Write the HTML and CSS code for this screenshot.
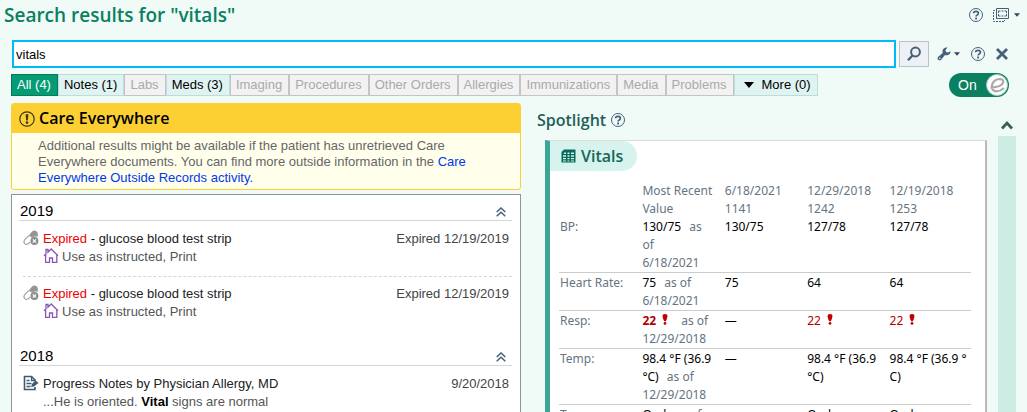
FILE: index.html
```html
<!DOCTYPE html>
<html lang="en">
<head>
<meta charset="utf-8">
<title>Search results for "vitals"</title>
<link rel="stylesheet" href="styles.css">
</head>
<body>
<svg class="symbols" aria-hidden="true">
  <symbol id="help" viewBox="0 0 16 16">
    <circle cx="8" cy="8" r="6.5" fill="none" stroke="currentColor"/>
    <path d="M5.6 6.3Q5.6 4.3 8 4.3T10.4 6.2Q10.4 7.3 9.2 7.9Q8.1 8.4 8.1 9.6" fill="none" stroke="currentColor" stroke-width="1.7"/>
    <path d="M7.2 10.6h1.8v1.8H7.2z" fill="currentColor"/>
  </symbol>
  <symbol id="caret" viewBox="0 0 10 6"><path d="M0 0h10L5 6z" fill="currentColor"/></symbol>
  <symbol id="collapse" viewBox="0 0 10 10"><path d="M.7 5L5 1l4.3 4M.7 9.3L5 5.3l4.3 4" fill="none" stroke="currentColor" stroke-width="1.5"/></symbol>
  <symbol id="pill" viewBox="0 0 16 16">
    <path d="M5.800 5.400L8.600 2Q10.300.300 12.300.700T14.800 3V6.800Q11.500 5.600 9 7.800z" fill="#969696"/>
    <path d="M6 5.600L2 9.400Q.3 11.400 1.400 13.200T5 14L7 12.200" fill="none" stroke="#a0a0a0" stroke-width="1.200"/>
    <circle cx="11.400" cy="11" r="4" fill="#8c8c8c"/>
    <path d="M9.800 9.400l3.200 3.200M13 9.400l-3.200 3.200" stroke="#fff" stroke-width="1.300"/>
  </symbol>
  <symbol id="home" viewBox="0 0 16 16">
    <path d="M1 7.800L3 6V1.500h2v2.700L8.200 1 15 7.800M2.600 7v7.400h3.900V10h3v4.400h4.300V7" fill="none" stroke="#8a56b4" stroke-width="1.300"/>
  </symbol>
  <symbol id="alert" viewBox="0 0 6 12">
    <path d="M3 0Q5.800 0 5.600 2.600 5.300 5 3.900 8H2.100Q.7 5 .4 2.600.200 0 3 0z" fill="#c00000"/>
    <circle cx="3" cy="10.300" r="1.500" fill="#c00000"/>
  </symbol>
</svg>

<div class="app">
  <header class="titlebar">
    <h1 class="title">Search results for "vitals"</h1>
    <div class="window-tools">
      <button class="icon-btn" aria-label="Help"><svg class="i16"><use href="#help"/></svg></button>
      <button class="icon-btn layout-btn" aria-label="Layout">
        <svg class="layout" viewBox="0 0 18 16"><path d="M4.500 1.500h12v10h-12z" fill="none" stroke="currentColor" stroke-width="1"/><path d="M6.500 4h8M6.500 9h8M6.500 4v5M14.500 4v5" fill="none" stroke="currentColor" stroke-dasharray="2 1"/><path d="M3 3.500H1.500v11h11V13" fill="none" stroke="currentColor" stroke-dasharray="2 1"/></svg>
        <svg class="small-caret"><use href="#caret"/></svg>
      </button>
    </div>
  </header>

  <form class="search-row" role="search">
    <input class="search" type="text" value="vitals" aria-label="Search" autofocus>
    <button class="go" type="button" aria-label="Search"><svg viewBox="0 0 16 16"><circle cx="9.500" cy="6" r="4.400" fill="none" stroke="currentColor" stroke-width="2"/><path d="M6.500 9.500L2 14.300" stroke="currentColor" stroke-width="2.400"/></svg></button>
    <div class="search-tools">
      <button class="icon-btn wrench-btn" type="button" aria-label="Settings">
        <svg class="i14" viewBox="0 0 14 14"><path d="M13.700 4.200Q13.500 7.800 10 8.200 8.800 8.300 8 8L4.300 12.400Q2.900 14 1.300 12.800T1.300 9.700L5.700 6Q5 3.500 6.500 1.800T10.600.600L8.500 2.900l.500 2 2.200.500z" fill="currentColor"/><circle cx="2.800" cy="11.200" r=".8" fill="#f0faf7"/></svg>
        <svg class="small-caret"><use href="#caret"/></svg>
      </button>
      <button class="icon-btn" type="button" aria-label="Search help"><svg class="i16"><use href="#help"/></svg></button>
      <button class="icon-btn" type="button" aria-label="Close"><svg class="i12" viewBox="0 0 12 12"><path d="M1 1l10 10M11 1L1 11" stroke="currentColor" stroke-width="2.800"/></svg></button>
    </div>
  </form>

  <div class="filter-row">
    <nav class="filters" aria-label="Result types">
      <button class="filter current">All (4)</button>
      <button class="filter">Notes (1)</button>
      <button class="filter" disabled>Labs</button>
      <button class="filter">Meds (3)</button>
      <button class="filter" disabled>Imaging</button>
      <button class="filter" disabled>Procedures</button>
      <button class="filter" disabled>Other Orders</button>
      <button class="filter" disabled>Allergies</button>
      <button class="filter" disabled>Immunizations</button>
      <button class="filter" disabled>Media</button>
      <button class="filter" disabled>Problems</button>
      <button class="filter more"><svg><use href="#caret"/></svg>More (0)</button>
    </nav>
    <button class="toggle" role="switch" aria-checked="true">On
      <svg viewBox="0 0 24 24"><circle cx="12" cy="12" r="10.500" fill="#fff" stroke="#9ccdbd"/><path d="M5.500 14.500Q17 14 18.300 9.200 18.500 6 14.500 6 9.500 6.300 7.300 11 5.600 16.500 10 18.200 14.500 19 19 15" fill="none" stroke="#aaa" stroke-width="2.200"/></svg>
    </button>
  </div>

  <main class="panes">
    <section class="results">
      <section class="banner">
        <h2 class="banner-title"><svg class="i16" viewBox="0 0 16 16"><circle cx="8" cy="8" r="7.200" fill="none" stroke="#3d3413" stroke-width="1.200"/><path d="M6.600 3.200h2.800L8.800 9.500H7.200z" fill="#3d3413"/><circle cx="8" cy="11.600" r="1.300" fill="#3d3413"/></svg>Care Everywhere</h2>
        <p class="banner-text">Additional results might be available if the patient has unretrieved Care Everywhere documents. You can find more outside information in the <a href="#">Care Everywhere Outside Records activity.</a></p>
      </section>
      <div class="list">
        <section class="year">
          <h3 class="year-head">2019 <button class="icon-btn" aria-label="Collapse 2019"><svg class="i10"><use href="#collapse"/></svg></button></h3>
          <article class="item">
            <svg class="i16"><use href="#pill"/></svg>
            <div class="item-body"><div><span class="expired">Expired</span> - glucose blood test strip</div><div class="sub"><svg class="i16"><use href="#home"/></svg>Use as instructed, Print</div></div>
            <span class="date">Expired 12/19/2019</span>
          </article>
          <article class="item">
            <svg class="i16"><use href="#pill"/></svg>
            <div class="item-body"><div><span class="expired">Expired</span> - glucose blood test strip</div><div class="sub"><svg class="i16"><use href="#home"/></svg>Use as instructed, Print</div></div>
            <span class="date">Expired 12/19/2019</span>
          </article>
        </section>
        <section class="year">
          <h3 class="year-head">2018 <button class="icon-btn" aria-label="Collapse 2018"><svg class="i10"><use href="#collapse"/></svg></button></h3>
          <article class="item">
            <svg class="i16" viewBox="0 0 16 16"><path d="M12 6V5L8.500 1.500h-7v13H12V12" fill="none" stroke="#3e5a70" stroke-width="1.600"/><path d="M8.500 1v4.500H12.500M3.500 5.500h3M3.500 8.500h5M3.500 11.500h4" fill="none" stroke="#3e5a70" stroke-width="1.300"/><path d="M8 12l1-3 3.500-3.500L15.500 8 11 11.500z" fill="#3e5a70"/></svg>
            <div class="item-body"><div>Progress Notes by Physician Allergy, MD</div><div class="sub"><span>...He is oriented. <b>Vital</b> signs are normal</span></div></div>
            <span class="date">9/20/2018</span>
          </article>
        </section>
      </div>
    </section>

    <section class="spotlight">
      <h2 class="spot-title">Spotlight <button class="icon-btn" aria-label="Spotlight help"><svg class="i16"><use href="#help"/></svg></button></h2>
      <div class="card">
        <h3 class="card-title"><svg viewBox="0 0 15 15"><path d="M3 .5h11.500v13H.5V3z" fill="#076a5b"/><path d="M3 3.500h2v1.500H3zM6.500 3.500h2v1.500h-2zM10 3.500h3v1.500h-3zM2 6.300h3v1.500H2zM6.500 6.300h2v1.500h-2zM10 6.300h3v1.500h-3zM2 9h3v1.300H2zM6.500 9h2v1.300h-2zM10 9h3v1.300h-3zM2 11.500h3v1H2zM6.500 11.500h2v1h-2zM10 11.500h3v1h-3z" fill="#d6f3ee"/></svg>Vitals</h3>
        <table class="vitals">
          <thead><tr><td></td><th scope="col">Most Recent<br>Value</th><th scope="col">6/18/2021<br>1141</th><th scope="col">12/29/2018<br>1242</th><th scope="col">12/19/2018<br>1253</th></tr></thead>
          <tbody>
            <tr><th scope="row">BP:</th><td>130/75 <span class="asof">as<br>of<br>6/18/2021</span></td><td>130/75</td><td>127/78</td><td>127/78</td></tr>
            <tr><th scope="row">Heart Rate:</th><td>75 <span class="asof">as of<br>6/18/2021</span></td><td>75</td><td>64</td><td>64</td></tr>
            <tr><th scope="row">Resp:</th><td><b class="high">22<svg><use href="#alert"/></svg></b> <span class="asof">as of<br>12/29/2018</span></td><td>—</td><td><span class="high">22<svg><use href="#alert"/></svg></span></td><td><span class="high">22<svg><use href="#alert"/></svg></span></td></tr>
            <tr><th scope="row">Temp:</th><td>98.4 °F (36.9<br>°C) <span class="asof">as of<br>12/29/2018</span></td><td>—</td><td>98.4 °F (36.9<br>°C)</td><td>98.4 °F (36.9 °<br>C)</td></tr>
            <tr><th scope="row">Temp</th><td>Oral <span class="asof">as of</span></td><td></td><td>Oral</td><td>Oral</td></tr>
          </tbody>
        </table>
      </div>
    </section>

    <div class="scroll">
      <button class="icon-btn" aria-label="Scroll up"><svg viewBox="0 0 12 10"><path d="M1 8.500L6 3l5 5.500" fill="none" stroke="#3f5b55" stroke-width="2.800"/></svg></button>
      <div class="track"></div>
    </div>
  </main>
</div>
</body>
</html>
```

FILE: styles.css
```css
* { box-sizing: border-box; }
body {
  margin: 0;
  background: #f0faf7;
  color: #000;
  font: 13px/18px "Liberation Sans", Arial, sans-serif;
}
h1, h2, h3, p { margin: 0; }
button { font: inherit; cursor: pointer; }
svg { display: block; flex: none; }
.symbols { position: absolute; width: 0; height: 0; }
.i16 { width: 16px; height: 16px; }
.i14 { width: 14px; height: 14px; }
.i12 { width: 12px; height: 12px; }
.i10 { width: 10px; height: 10px; }
.icon-btn {
  display: flex;
  align-items: center;
  padding: 0;
  border: 0;
  background: none;
  color: #46607a;
}
.small-caret { width: 6px; height: 4px; color: #33475a; }

.app { display: flex; flex-direction: column; height: 100vh; overflow: hidden; }

.titlebar {
  display: flex;
  justify-content: space-between;
  align-items: center;
  padding: 2px 7px 2px 4px;
}
.title { color: #0a8060; font: 600 19px/26px "Open Sans", "Noto Sans", sans-serif; }
.window-tools { display: flex; gap: 8px; }
.layout { width: 18px; height: 16px; }
.layout-btn { gap: 4px; }

.search-row { display: flex; align-items: center; padding: 10px 19px 5px 12px; }
.search {
  flex: 1;
  min-width: 0;
  height: 28px;
  padding: 0 2px;
  border: 2px solid #00b9f8;
  outline: 0;
  background: #fff;
  font: inherit;
}
.go {
  display: grid;
  place-items: center;
  width: 30px;
  height: 26px;
  margin-left: 3px;
  padding: 0;
  border: 1px solid #bcc2ca;
  background: #edf0f4;
  color: #46607a;
}
.go svg { width: 16px; height: 16px; }
.search-tools { display: flex; align-items: center; gap: 10px; margin-left: 8px; }
.wrench-btn { gap: 3px; }

.filter-row {
  display: flex;
  align-items: center;
  justify-content: space-between;
  padding: 0 18px 6px 11px;
}
.filters { display: flex; }
.filter {
  height: 22px;
  padding: 0 6px 0 5px;
  border: 1px solid #bfdcdc;
  background: #dff3f0;
  color: #000;
}
.filter:disabled { border-color: #c4c4c4; background: #f2f2f2; color: #aaa; }
.filter.current { border-color: #087a5a; background: #059b75; color: #fff; }
.more { display: flex; align-items: center; gap: 8px; padding-left: 9px; }
.more svg { width: 10px; height: 6px; }
.toggle {
  display: flex;
  align-items: center;
  justify-content: space-between;
  width: 60px;
  height: 24px;
  padding: 0 0 0 9px;
  border: 0;
  border-radius: 12px;
  background: #0a8060;
  color: #fff;
  font-size: 14px;
}
.toggle svg { width: 24px; height: 24px; }

.panes {
  display: grid;
  grid-template-columns: minmax(0, 510fr) minmax(0, 477fr) 18px;
  flex: 1;
  min-height: 0;
  padding: 0 11px;
}
.results { display: flex; flex-direction: column; gap: 4px; min-height: 0; }
.banner { border: 1px solid #fcd033; border-radius: 3px; background: #ffffec; }
.banner-title {
  display: flex;
  align-items: center;
  gap: 4px;
  padding: 0 7px;
  background: #fcd033;
  font: 600 16px/29px "Open Sans", "Noto Sans", sans-serif;
}
.banner-text { padding: 5px 40px 3px 26px; color: #666; line-height: 16px; }
.banner-text a { color: #0038f0; text-decoration: none; }

.list {
  flex: 1;
  min-height: 0;
  overflow: hidden;
  padding: 6px 8px 0 7px;
  border: 1px solid #949494;
  border-bottom: 0;
  background: #fff;
}
.year { padding-bottom: 15px; }
.year-head {
  display: flex;
  justify-content: space-between;
  padding: 0 6px 0 1px;
  border-bottom: 1px solid #d6d6d6;
  font-size: 15px;
  font-weight: 400;
  line-height: 19px;
}
.year-head .icon-btn { padding-top: 3px; }
.item {
  display: flex;
  gap: 4px;
  margin-left: 4px;
  padding: 9px 3px 10px 0;
  color: #222;
}
.item + .item { border-top: 1px dashed #d6d6d6; padding-top: 8px; }
.item-body { flex: 1; }
.sub { display: flex; gap: 3px; color: #555; }
.sub b { color: #000; }
.date { color: #444; }
.expired { color: #f00000; }

.spotlight { display: flex; flex-direction: column; min-height: 0; padding: 4px 0 0 16px; }
.spot-title {
  display: flex;
  align-items: center;
  gap: 4px;
  color: #1f6056;
  font: 600 16px/26px "Open Sans", "Noto Sans", sans-serif;
}
.card {
  flex: 1;
  min-height: 0;
  overflow: hidden;
  margin: 7px 11px 0 8px;
  border: solid;
  border-width: 1px 2px 0 5px;
  border-color: #dcdcdc #b9b9b9 #b9b9b9 #3ba697;
  background: #fff;
  font: 12px/18px "Noto Sans", "Open Sans", sans-serif;
}
.card-title {
  display: flex;
  align-items: center;
  gap: 5px;
  width: fit-content;
  padding: 0 14px 0 11px;
  border-radius: 0 15px 15px 0;
  background: #d6f3ee;
  color: #17655a;
  font: 600 16px/30px "Open Sans", "Noto Sans", sans-serif;
}
.card-title svg { width: 15px; height: 15px; }
.vitals {
  width: calc(100% - 23px);
  margin: 11px 14px 0 9px;
  border-collapse: separate;
  border-spacing: 0;
  table-layout: fixed;
}
.vitals th, .vitals td {
  padding: 0 0 0 1px;
  text-align: left;
  vertical-align: top;
  white-space: nowrap;
  font-weight: 400;
}
.vitals th, .asof { color: #66747f; }
.vitals tbody th, .vitals tbody td { border-bottom: 1px solid #ccc; }
.vitals tbody tr + tr th, .vitals tbody tr + tr td { padding-top: 1px; }
.asof { margin-left: 5px; }
.high { color: #b00000; }
.high svg { display: inline-block; width: 6px; height: 11px; margin: 0 5px 0 6px; }

.scroll { display: flex; flex-direction: column; }
.scroll .icon-btn { justify-content: center; height: 33px; padding-top: 11px; }
.scroll .icon-btn svg { width: 12px; height: 10px; }
.track { flex: 1; background: #cdece3; }
```
